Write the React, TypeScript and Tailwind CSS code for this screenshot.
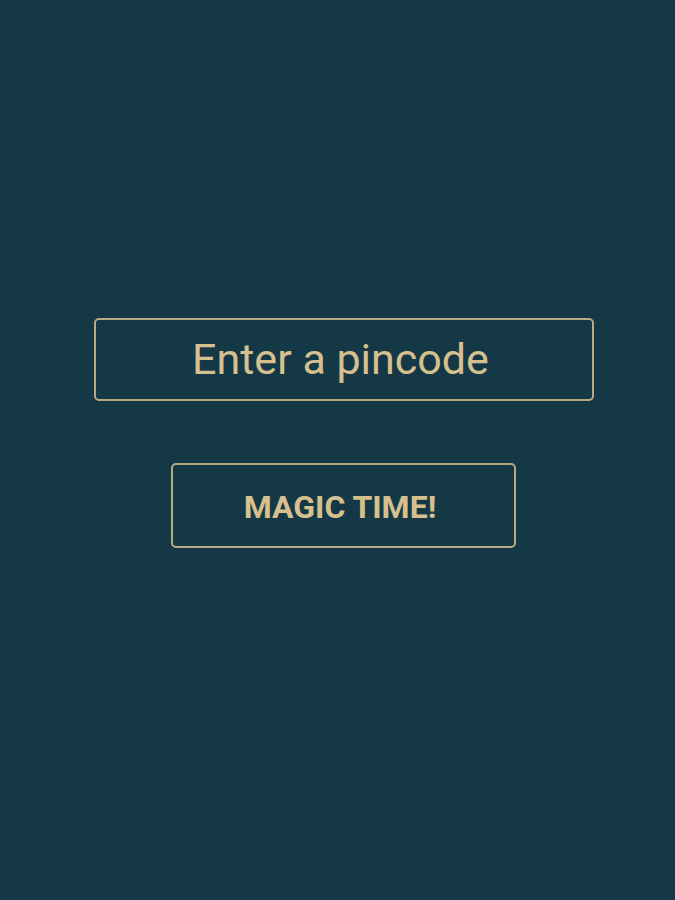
export default function App() {
	return (
		<div
			className="flex min-h-[900px] w-full flex-col items-center bg-[#153846] pt-[318px] pl-[12px]"
			style={{ fontFamily: "Roboto, 'Liberation Sans', sans-serif" }}
		>
			<div className="flex h-[83px] w-[500px] items-center justify-center rounded-[5px] border-2 border-[#b9a982] pr-[6px]">
				<span className="text-[43px] leading-none text-[#d5c08e]">
					Enter a pincode
				</span>
			</div>
			<button
				type="button"
				className="mt-[62px] flex h-[85px] w-[345px] items-center justify-center rounded-[5px] border-2 border-[#b9a982] pt-[3px] pr-[7px]"
			>
				<span className="text-[32px] font-bold leading-none text-[#d5c08e]">
					MAGIC TIME!
				</span>
			</button>
		</div>
	);
}
